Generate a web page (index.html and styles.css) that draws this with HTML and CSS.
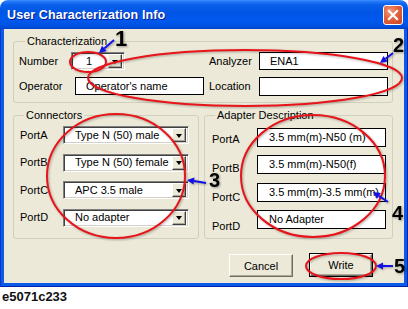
FILE: index.html
```html
<!DOCTYPE html>
<html>
<head>
<meta charset="utf-8">
<link rel="stylesheet" href="styles.css">
</head>
<body>
<div class="page">
  <div class="window">
    <div class="titlebar">
      <span class="title">User Characterization Info</span>
      <span class="close"><svg width="18" height="18" viewBox="0 0 18 18"><path d="M5 5 L13 13 M13 5 L5 13" stroke="#fff" stroke-width="2.2" stroke-linecap="square"/></svg></span>
    </div>
    <div class="frame">
      <div class="client">
        <div class="group group-char">
          <div class="group-title">Characterization</div>
          <div class="char-grid">
            <span class="lbl">Number</span>
            <div class="combo combo-num"><span class="combo-text">1</span><span class="ddbtn"><i class="tri"></i></span></div>
            <span class="lbl lbl-right">Analyzer</span>
            <div class="tbox">ENA1</div>
            <span class="lbl">Operator</span>
            <div class="tbox tbox-op">Operator's name</div>
            <span class="lbl lbl-right">Location</span>
            <div class="tbox tbox-tall"></div>
          </div>
        </div>
        <div class="groups-row">
          <div class="group group-conn">
            <div class="group-title">Connectors</div>
            <div class="conn-grid">
              <span class="lbl">PortA</span>
              <div class="combo"><span class="combo-text">Type N (50) male</span><span class="ddbtn"><i class="tri"></i></span></div>
              <span class="lbl">PortB</span>
              <div class="combo"><span class="combo-text">Type N (50) female</span><span class="ddbtn"><i class="tri"></i></span></div>
              <span class="lbl">PortC</span>
              <div class="combo"><span class="combo-text">APC 3.5 male</span><span class="ddbtn"><i class="tri"></i></span></div>
              <span class="lbl">PortD</span>
              <div class="combo"><span class="combo-text">No adapter</span><span class="ddbtn"><i class="tri"></i></span></div>
            </div>
          </div>
          <div class="group group-adapt">
            <div class="group-title">Adapter Description</div>
            <div class="adapt-body">
              <div class="adapt-labels">
                <span class="lbl">PortA</span>
                <span class="lbl">PortB</span>
                <span class="lbl">PortC</span>
                <span class="lbl">PortD</span>
              </div>
              <div class="adapt-boxes">
                <div class="tbox tbox-adapt">3.5 mm(m)-N50 (m)</div>
                <div class="tbox tbox-adapt">3.5 mm(m)-N50(f)</div>
                <div class="tbox tbox-adapt">3.5 mm(m)-3.5 mm(m)</div>
                <div class="tbox tbox-adapt">No Adapter</div>
              </div>
            </div>
          </div>
        </div>
        <div class="buttons">
          <button class="btn">Cancel</button>
          <span class="default-ring"><button class="btn btn-inner">Write</button></span>
        </div>
      </div>
    </div>
  </div>
  <div class="caption">e5071c233</div>

  <svg class="annot" width="408" height="309" viewBox="0 0 408 309">
    <g class="rings" fill="none" stroke="#E8141A" stroke-width="2">
      <ellipse cx="88" cy="62" rx="18" ry="10"/>
      <ellipse cx="245" cy="78" rx="157" ry="28"/>
      <ellipse cx="116" cy="176" rx="69" ry="62"/>
      <ellipse cx="313" cy="176" rx="72" ry="61"/>
      <ellipse cx="341" cy="266" rx="35" ry="13"/>
    </g>
    <g class="arrows" stroke="#1212E6" stroke-width="2" fill="#1212E6">
      <line x1="114" y1="40" x2="104.3" y2="48.4"/>
      <polygon stroke="none" points="99,53 106.6,51.1 102,45.8"/>
      <line x1="393" y1="53" x2="385.6" y2="58.7"/>
      <polygon stroke="none" points="380,63 387.7,61.5 383.4,55.9"/>
      <line x1="206" y1="183" x2="193.9" y2="181.1"/>
      <polygon stroke="none" points="187,180 193.4,184.6 194.5,177.6"/>
      <line x1="388" y1="202" x2="378.8" y2="195.9"/>
      <polygon stroke="none" points="373,192 376.9,198.8 380.8,193"/>
      <line x1="393" y1="266" x2="383" y2="266"/>
      <polygon stroke="none" points="376,266 383,262.5 383,269.5"/>
    </g>
    <g class="nums">
      <text x="115" y="46" class="num num-big">1</text>
      <text x="393" y="52" class="num">2</text>
      <text x="209" y="187" class="num">3</text>
      <text x="392" y="220" class="num">4</text>
      <text x="394" y="273" class="num">5</text>
    </g>
  </svg>
</div>
</body>
</html>
```

FILE: styles.css
```css
html, body {
  margin: 0;
  padding: 0;
  background: #ffffff;
}
body {
  font-family: "Liberation Sans", Arial, sans-serif;
  font-size: 11px;
  color: #000;
}
.page {
  position: relative;
  width: 408px;
  height: 309px;
  overflow: hidden;
}
.window {
  width: 408px;
  display: flex;
  flex-direction: column;
}
.titlebar {
  height: 29px;
  box-sizing: border-box;
  border-radius: 8px 8px 0 0;
  background: linear-gradient(to bottom, #3C8EFF 0px, #1E73F5 2px, #0A5FEA 5px, #0055E5 12px, #0058EE 20px, #0052E0 26px, #0040C8 29px);
  display: flex;
  justify-content: space-between;
  align-items: flex-start;
  padding: 0 5px 0 7px;
}
.title {
  color: #fff;
  font-weight: bold;
  font-size: 12.5px;
  line-height: 15px;
  margin-top: 8px;
  text-shadow: 1px 1px 0 #0A1F8F;
  letter-spacing: 0.1px;
}
.close {
  width: 20px;
  height: 20px;
  margin-top: 5px;
  box-sizing: border-box;
  border: 1px solid #fff;
  border-radius: 3px;
  background: radial-gradient(circle at 35% 30%, #F19A7C 0%, #E2623D 45%, #C9431F 100%);
  display: flex;
  align-items: center;
  justify-content: center;
}
.close svg { display: block; }
.frame {
  background: #0A5CE8;
  padding: 0 4px 4px 4px;
  box-shadow: inset 1px 0 0 #0935C8, inset -1px 0 0 #0025A8, inset 0 -1px 0 #0025A8;
}
.client {
  background: #ECE9D8;
  height: 254px;
  box-sizing: border-box;
  padding: 12px 0 0 9px;
}
.group {
  border: 1px solid #D0D0BF;
  border-radius: 3px;
  box-sizing: border-box;
}
.group-title {
  margin-top: -7px;
  line-height: 13px;
  height: 13px;
  padding: 0 2px;
  background: #ECE9D8;
  width: max-content;
  margin-left: 10px;
}
.group-char {
  width: 380px;
  height: 62px;
}
.group-char .group-title { margin-left: 11px; }
.char-grid {
  display: grid;
  grid-template-columns: 52px 133px 55px 129px;
  grid-template-rows: 18px 18px;
  row-gap: 7px;
  padding: 4px 0 0 5px;
  align-items: center;
}
.lbl {
  line-height: 13px;
  white-space: nowrap;
}
.lbl-right { margin-left: 5px; }
.tbox {
  height: 18px;
  box-sizing: border-box;
  border: 1px solid #000;
  background: #fff;
  padding-left: 10px;
  line-height: 16px;
  white-space: nowrap;
  overflow: hidden;
}
.tbox-op { margin-left: 4px; width: 129px; }
.tbox-tall { height: 19px; }
.combo {
  height: 18px;
  box-sizing: border-box;
  background: #fff;
  border: 1px solid;
  border-color: #808080 #FFFFFF #FFFFFF #808080;
  box-shadow: inset 1px 1px 0 #404040, inset -1px -1px 0 #D4D0C8;
  display: flex;
  align-items: center;
  justify-content: space-between;
  padding: 1px 2px 1px 11px;
}
.combo-text {
  white-space: nowrap;
  line-height: 13px;
}
.combo-num { width: 54px; padding-left: 14px; }
.ddbtn {
  width: 14px;
  height: 14px;
  box-sizing: border-box;
  background: #ECE9D8;
  border: 1px solid;
  border-color: #FFFFFF #404040 #404040 #FFFFFF;
  box-shadow: inset -1px -1px 0 #ACA899;
  display: flex;
  align-items: center;
  justify-content: center;
  flex: none;
}
.tri {
  width: 0;
  height: 0;
  border-left: 3.5px solid transparent;
  border-right: 3.5px solid transparent;
  border-top: 4px solid #000;
  margin-top: 1px;
}
.groups-row {
  display: flex;
  gap: 5px;
  margin-top: 12px;
}
.group-conn {
  width: 186px;
  height: 124px;
}
.group-adapt {
  width: 189px;
  height: 124px;
}
.conn-grid {
  display: grid;
  grid-template-columns: 43px 126px;
  grid-auto-rows: 18px;
  row-gap: 9.67px;
  padding: 4px 0 0 6px;
  align-items: center;
}
.adapt-body {
  display: flex;
  padding-left: 7px;
}
.adapt-labels {
  width: 45px;
  display: flex;
  flex-direction: column;
  gap: 16px;
  padding-top: 10.5px;
}
.adapt-boxes {
  display: flex;
  flex-direction: column;
  gap: 8.33px;
  padding-top: 6px;
}
.tbox-adapt {
  width: 129px;
  height: 19px;
  padding-left: 11px;
  line-height: 17px;
}
.buttons {
  display: flex;
  justify-content: flex-end;
  align-items: flex-start;
  gap: 16px;
  margin-top: 14px;
  padding-right: 31px;
}
.btn {
  font-family: "Liberation Sans", Arial, sans-serif;
  font-size: 11px;
  color: #000;
  width: 64px;
  height: 23px;
  margin: 1px 0 0 0;
  padding: 0;
  box-sizing: border-box;
  background: #ECE9D8;
  border: 1px solid;
  border-color: #FFFFFF #716F64 #716F64 #FFFFFF;
  box-shadow: inset -1px -1px 0 #ACA899;
  border-radius: 0;
}
.default-ring {
  display: block;
  width: 64px;
  height: 24px;
  box-sizing: border-box;
  border: 1px solid #000;
}
.btn-inner {
  width: 62px;
  height: 22px;
  margin: 0;
  display: block;
}
.caption {
  font-weight: bold;
  font-size: 13px;
  line-height: 15px;
  margin-top: 2px;
  padding-left: 2px;
  color: #111;
}
.annot {
  position: absolute;
  left: 0;
  top: 0;
  pointer-events: none;
}
.rings, .arrows {
  filter: drop-shadow(1.5px 1.5px 1px rgba(0, 0, 0, 0.3));
}
.num {
  font-family: "Liberation Sans", Arial, sans-serif;
  font-weight: bold;
  font-size: 20px;
  fill: #000;
  filter: drop-shadow(1.5px 1.5px 1px rgba(0, 0, 0, 0.35));
}
.num-big { font-size: 22px; }
```
